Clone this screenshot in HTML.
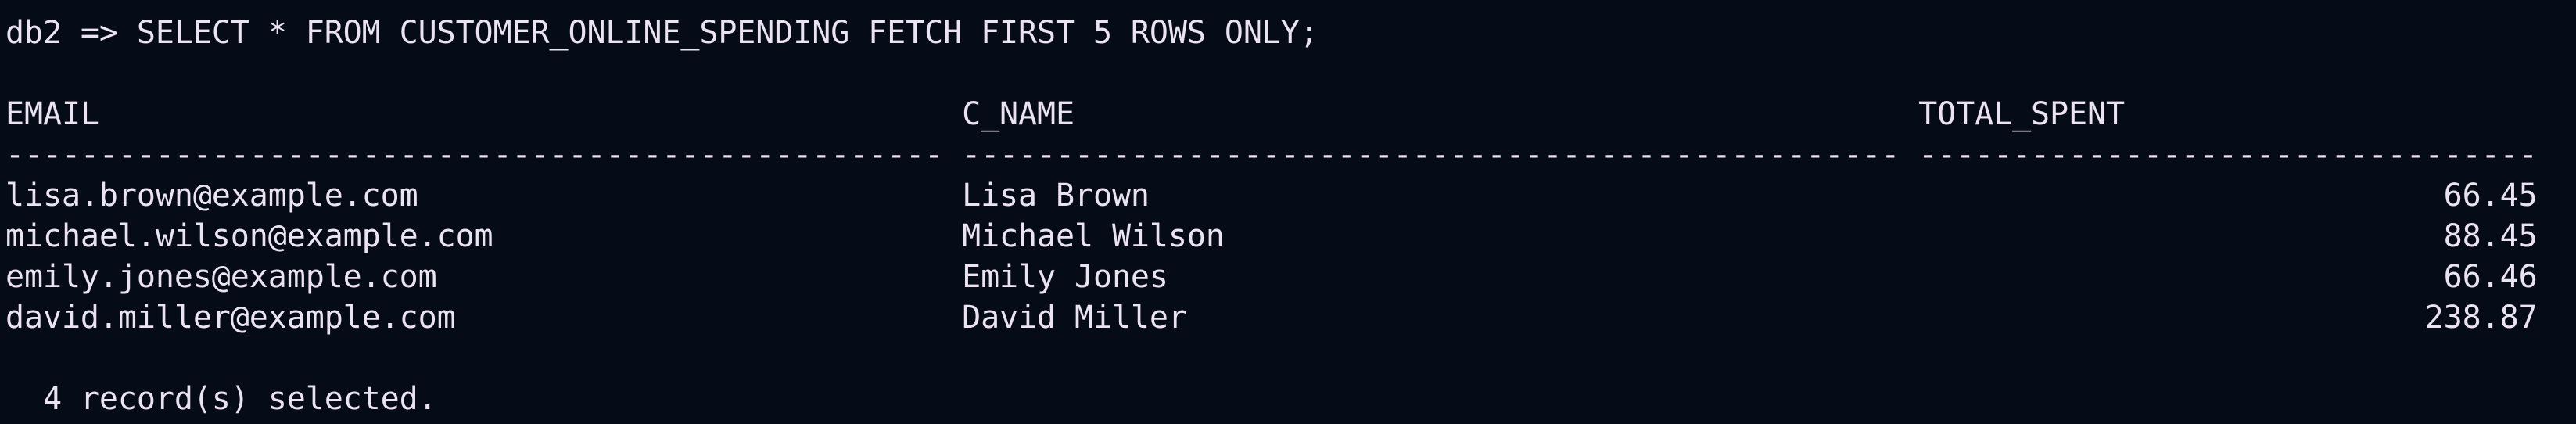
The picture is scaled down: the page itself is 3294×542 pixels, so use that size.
<!DOCTYPE html>
<html><head><meta charset="utf-8"><style>
html,body{margin:0;padding:0;background:#050b17;width:3294px;height:542px;overflow:hidden}
pre{margin:0;padding:16px 0 0 7px;font-family:"DejaVu Sans Mono","Liberation Mono",monospace;font-size:40px;letter-spacing:-0.1px;line-height:52px;color:#ebe3f2;white-space:pre}
</style></head><body><pre>db2 =&gt; SELECT * FROM CUSTOMER_ONLINE_SPENDING FETCH FIRST 5 ROWS ONLY;

EMAIL                                              C_NAME                                             TOTAL_SPENT
-------------------------------------------------- -------------------------------------------------- ---------------------------------
lisa.brown@example.com                             Lisa Brown                                                                     66.45
michael.wilson@example.com                         Michael Wilson                                                                 88.45
emily.jones@example.com                            Emily Jones                                                                    66.46
david.miller@example.com                           David Miller                                                                  238.87

  4 record(s) selected.
</pre></body></html>
